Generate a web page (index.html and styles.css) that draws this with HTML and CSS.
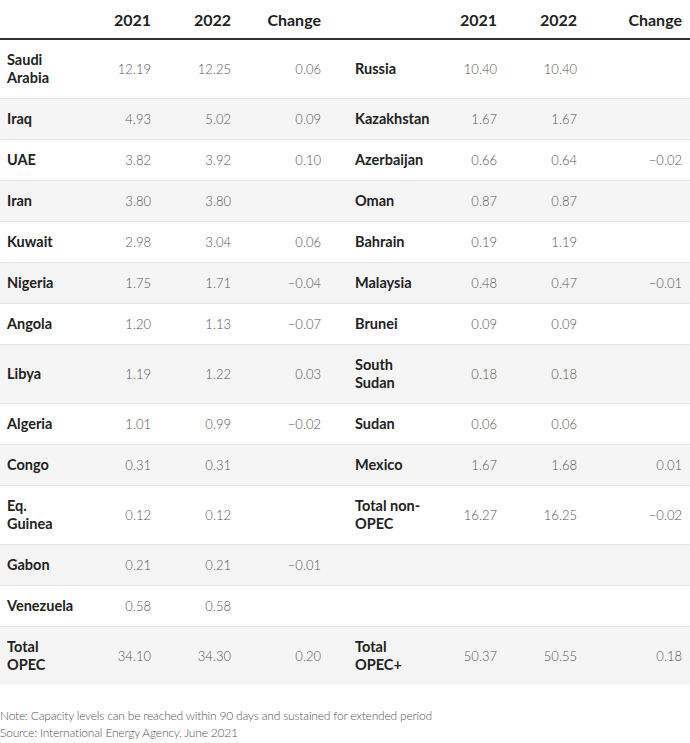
FILE: index.html
```html
<!DOCTYPE html>
<html lang="en">
<head>
<meta charset="utf-8">
<title>OPEC+ capacity</title>
<link rel="stylesheet" href="styles.css">
</head>
<body>
<table class="cap">
  <colgroup>
    <col class="c-name1"><col class="c-a1"><col class="c-b1"><col class="c-ch1">
    <col class="c-name2"><col class="c-a2"><col class="c-b2"><col class="c-ch2">
  </colgroup>
  <thead>
    <tr>
      <th></th><th>2021</th><th>2022</th><th class="ch1">Change</th>
      <th></th><th>2021</th><th>2022</th><th>Change</th>
    </tr>
  </thead>
  <tbody>
    <tr><td class="name">Saudi<br>Arabia</td><td>12.19</td><td>12.25</td><td class="ch1">0.06</td><td class="name">Russia</td><td>10.40</td><td>10.40</td><td></td></tr>
    <tr><td class="name">Iraq</td><td>4.93</td><td>5.02</td><td class="ch1">0.09</td><td class="name">Kazakhstan</td><td>1.67</td><td>1.67</td><td></td></tr>
    <tr><td class="name">UAE</td><td>3.82</td><td>3.92</td><td class="ch1">0.10</td><td class="name">Azerbaijan</td><td>0.66</td><td>0.64</td><td>−0.02</td></tr>
    <tr><td class="name">Iran</td><td>3.80</td><td>3.80</td><td class="ch1"></td><td class="name">Oman</td><td>0.87</td><td>0.87</td><td></td></tr>
    <tr><td class="name">Kuwait</td><td>2.98</td><td>3.04</td><td class="ch1">0.06</td><td class="name">Bahrain</td><td>0.19</td><td>1.19</td><td></td></tr>
    <tr><td class="name">Nigeria</td><td>1.75</td><td>1.71</td><td class="ch1">−0.04</td><td class="name">Malaysia</td><td>0.48</td><td>0.47</td><td>−0.01</td></tr>
    <tr><td class="name">Angola</td><td>1.20</td><td>1.13</td><td class="ch1">−0.07</td><td class="name">Brunei</td><td>0.09</td><td>0.09</td><td></td></tr>
    <tr><td class="name">Libya</td><td>1.19</td><td>1.22</td><td class="ch1">0.03</td><td class="name">South<br>Sudan</td><td>0.18</td><td>0.18</td><td></td></tr>
    <tr><td class="name">Algeria</td><td>1.01</td><td>0.99</td><td class="ch1">−0.02</td><td class="name">Sudan</td><td>0.06</td><td>0.06</td><td></td></tr>
    <tr><td class="name">Congo</td><td>0.31</td><td>0.31</td><td class="ch1"></td><td class="name">Mexico</td><td>1.67</td><td>1.68</td><td>0.01</td></tr>
    <tr><td class="name">Eq.<br>Guinea</td><td>0.12</td><td>0.12</td><td class="ch1"></td><td class="name">Total non-<br>OPEC</td><td>16.27</td><td>16.25</td><td>−0.02</td></tr>
    <tr><td class="name">Gabon</td><td>0.21</td><td>0.21</td><td class="ch1">−0.01</td><td class="name"></td><td></td><td></td><td></td></tr>
    <tr><td class="name">Venezuela</td><td>0.58</td><td>0.58</td><td class="ch1"></td><td class="name"></td><td></td><td></td><td></td></tr>
    <tr class="total"><td class="name">Total<br>OPEC</td><td>34.10</td><td>34.30</td><td class="ch1">0.20</td><td class="name">Total<br>OPEC+</td><td>50.37</td><td>50.55</td><td>0.18</td></tr>
  </tbody>
</table>
<div class="notes">
  <p>Note: Capacity levels can be reached within 90 days and sustained for extended period</p>
  <p>Source: International Energy Agency, June 2021</p>
</div>
</body>
</html>
```

FILE: styles.css
```css
html, body {
  margin: 0;
  padding: 0;
  background: #ffffff;
}

body {
  font-family: "Lato", "Noto Sans", sans-serif;
  color: #222222;
  width: 690px;
}

.cap {
  width: 690px;
  border-collapse: collapse;
  table-layout: fixed;
}

.c-name1 { width: 80px; }
.c-a1 { width: 79px; }
.c-b1 { width: 80px; }
.c-ch1 { width: 109px; }
.c-name2 { width: 90px; }
.c-a2 { width: 67px; }
.c-b2 { width: 80px; }
.c-ch2 { width: 105px; }

.cap th {
  height: 38px;
  padding: 0 8px 0 0;
  text-align: right;
  font-size: 16px;
  font-weight: 700;
  color: #222222;
  border-bottom: 2px solid #333333;
  vertical-align: middle;
  box-sizing: content-box;
}

.cap td {
  padding: 11px 8px 11px 0;
  line-height: 18px;
  text-align: right;
  font-size: 13px;
  font-weight: 300;
  color: #555555;
  border-bottom: 1px solid #e4e4e4;
  vertical-align: middle;
  white-space: nowrap;
}

.cap th.ch1,
.cap td.ch1 {
  padding-right: 27px;
}

.cap td.name {
  text-align: left;
  padding-left: 7px;
  padding-right: 0;
  font-size: 14.5px;
  font-weight: 700;
  color: #222222;
}

.cap tbody tr:nth-child(even) {
  background: #f5f5f5;
}

.cap tbody tr.total td {
  border-bottom: none;
}

.notes {
  margin-top: 22px;
  font-size: 12px;
  letter-spacing: -0.2px;
  font-weight: 300;
  color: #555555;
  line-height: 17px;
}

.notes p {
  margin: 0;
}
```
